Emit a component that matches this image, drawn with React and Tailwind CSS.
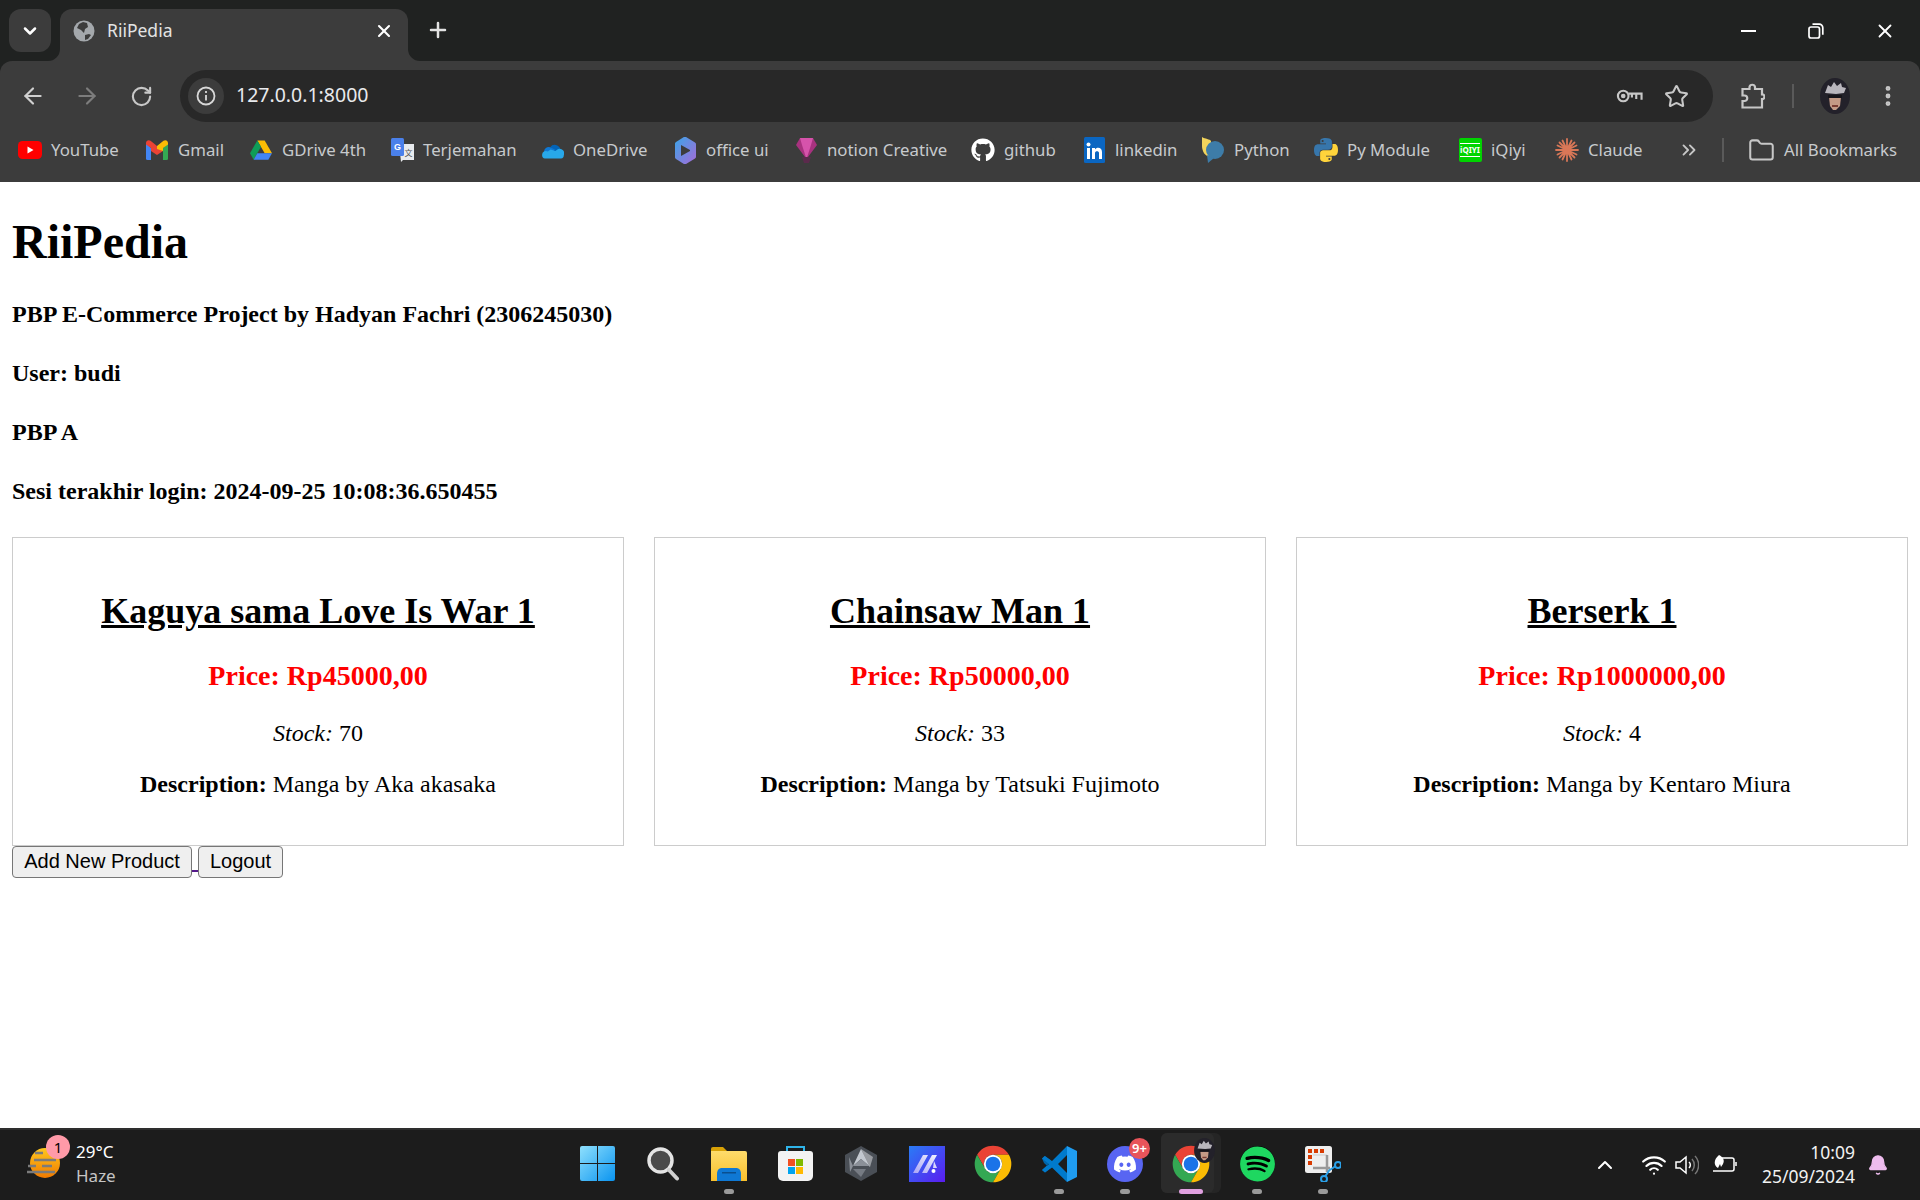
import { ArrowLeft, ArrowRight, RotateCw, Star, ChevronDown, ChevronUp, ChevronsRight, X, Plus, EllipsisVertical, Folder, Wifi, Bell } from 'lucide-react';
import { FaDiscord, FaSpotify, FaGithub } from 'react-icons/fa';

const PY = 'M11.9 2c-5 0-4.7 2.2-4.7 2.2v2.3h4.8v.7H5.3S2 6.8 2 12s2.9 5 2.9 5h1.7v-2.4s-.1-2.9 2.8-2.9h4.8s2.7 0 2.7-2.6V4.8S16.9 2 11.9 2zM9.2 3.6a.9.9 0 1 1 0 1.8.9.9 0 0 1 0-1.8z';

function ChromeLogo({ className }) {
    return (
        <svg viewBox="0 0 48 48" className={className}>
            <path fill="#ea4335" d="M6.68 14A20 20 0 0 1 41.32 14H24A10 10 0 0 0 15.34 29Z" />
            <path fill="#34a853" d="M6.68 14 15.34 29A10 10 0 0 0 32.66 29L24 44A20 20 0 0 1 6.68 14Z" />
            <path fill="#fbbc04" d="M41.32 14H24A10 10 0 0 1 32.66 29L24 44A20 20 0 0 0 41.32 14Z" />
            <circle cx="24" cy="24" r="10" fill="#fff" />
            <circle cx="24" cy="24" r="8" fill="#1a73e8" />
        </svg>
    );
}

function Avatar({ className }) {
    return (
        <svg viewBox="0 0 30 36" className={className}>
            <ellipse cx="15" cy="18" rx="15" ry="18" fill="#23212a" />
            <path fill="#b9b6bd" d="M5 15 8 7l3 2 3-5 3 4 4-3 1 4 4 1-2 5-8 1z" />
            <path fill="#c49a86" d="M9 19h12l-1 9-4 4h-3l-3-4z" />
            <rect x="8" y="17" width="14" height="3" fill="#17151b" />
            <path fill="#7a3d34" d="M12 27h6v2h-6z" />
        </svg>
    );
}

const bookmarks = [
    { label: 'YouTube', width: 'w-[127px]', icon: (
        <svg viewBox="0 0 24 18" className="w-[24px] h-[18px]"><rect width="24" height="18" rx="4.5" fill="#f00" /><path fill="#fff" d="m9.5 5.5 6 3.5-6 3.5z" /></svg>
    ) },
    { label: 'Gmail', width: 'w-[104px]', icon: (
        <svg viewBox="0 0 22 20" className="w-[22px] h-[20px]">
            <path fill="#4285f4" d="M0 3v15.5A1.5 1.5 0 0 0 1.5 20H5V8z" />
            <path fill="#34a853" d="M22 3v15.5a1.5 1.5 0 0 1-1.500 1.500H17V8z" />
            <path fill="#ea4335" d="M0 3c0-2.500 2.700-3.700 4.500-2.200L11 6l6 3v2l-6 4-6-4V8L0 4.500z" />
            <path fill="#fbbc04" d="M22 3c0-2.500-2.700-3.700-4.500-2.200L11 6v3l6 2V8l5-3.500z" />
        </svg>
    ) },
    { label: 'GDrive 4th', width: 'w-[141px]', icon: (
        <svg viewBox="0 0 24 21" className="w-[22px] h-[20px]">
            <path fill="#fbbc04" d="M8 0h8l8 14h-8z" />
            <path fill="#0f9d58" d="M8 0 0 14l4 7 8-14z" />
            <path fill="#4285f4" d="M4 21h16l4-7H8z" />
        </svg>
    ) },
    { label: 'Terjemahan', width: 'w-[150px]', icon: (
        <svg viewBox="0 0 23 24" className="w-[23px] h-[24px]">
            <path fill="#e8eaed" d="M8 6h15v16H12l-2 2z" />
            <rect width="13" height="18" rx="1.500" fill="#4a80ea" />
            <text x="6.500" y="12" fontSize="9" fontWeight="700" textAnchor="middle" fill="#fff" fontFamily="Liberation Sans, sans-serif">G</text>
            <text x="17.500" y="18" fontSize="8" textAnchor="middle" fill="#555" fontFamily="Noto Sans CJK SC, sans-serif">文</text>
        </svg>
    ) },
    { label: 'OneDrive', width: 'w-[133px]', icon: (
        <svg viewBox="0 0 24 18" className="w-[23px] h-[17px]">
            <path fill="#0364b8" d="M9.500 5.500a6 6 0 0 1 10.700 2L14 12z" />
            <path fill="#0f78d4" d="M3 10.500a5 5 0 0 1 6.500-5l5 2.500-6 8H4z" />
            <path fill="#28a8ea" d="M1 13.500A4 4 0 0 1 7 10l3-2 5 1.500 3-2a4.800 4.800 0 0 1 6 6.500 3.500 3.500 0 0 1-3 3.500H4a3.500 3.500 0 0 1-3-3.500z" />
        </svg>
    ) },
    { label: 'office ui', width: 'w-[121px]', icon: (
        <svg viewBox="0 0 21 27" className="w-[21px] h-[27px]">
            <defs><linearGradient id="off" x1="0" y1="0" x2="1" y2="1"><stop offset="0" stopColor="#3aa5e8" /><stop offset="1" stopColor="#a66bd8" /></linearGradient></defs>
            <path fill="url(#off)" d="M11 0l9 5.500c.7.500 1 1 1 2v12c0 1-.3 1.500-1 2L11 27c-.8.300-1.500.200-2.500-.3L1 22c-.7-.5-1-1-1-2V7c0-1 .3-1.500 1-2L8.500.300C9.500-.2 10.200-.2 11 0z" />
            <path fill="#3c3c3c" d="M6 8l9 5v1l-9 5z" />
        </svg>
    ) },
    { label: 'notion Creative', width: 'w-[177px]', icon: (
        <svg viewBox="0 0 21 26" className="w-[21px] h-[26px]">
            <path fill="#a8327f" d="M4 1h13l4 7-10.500 14L0 8z" />
            <path fill="#d653ab" d="M4 1h13l-2 7H6zM6 8h9l-4.500 14z" />
            <path fill="#5b2a4c" d="M6 20h9l-2 6H8z" />
        </svg>
    ) },
    { label: 'github', width: 'w-[111px]', icon: <FaGithub className="w-[24px] h-[24px] text-white" /> },
    { label: 'linkedin', width: 'w-[119px]', icon: (
        <svg viewBox="0 0 21 26" className="w-[21px] h-[26px]">
            <rect width="21" height="26" rx="1.500" fill="#0a66c2" />
            <rect x="3" y="11" width="3" height="11" fill="#fff" /><circle cx="4.500" cy="7.500" r="2" fill="#fff" />
            <path fill="#fff" d="M8 11h3v1.500c1.500-2.500 7-2.500 7 2.500v7h-3v-6c0-2.500-4-2.500-4 0v6H8z" />
        </svg>
    ) },
    { label: 'Python', width: 'w-[113px]', icon: (
        <svg viewBox="0 0 22 26" className="w-[22px] h-[26px]">
            <path fill="#f2d45c" d="M0 0c3 2 8 2 9 4v16C3 20 0 14 0 9z" />
            <circle cx="13" cy="13" r="9" fill="#3d7ca8" /><path fill="#3d7ca8" d="m5 18 1 8 6-5z" />
        </svg>
    ) },
    { label: 'Py Module', width: 'w-[144px]', icon: (
        <svg viewBox="2 2 20 20" className="w-[24px] h-[26px]">
            <path fill="#3776ab" d={PY} /><path fill="#ffd43b" d={PY} transform="rotate(180 12 12)" />
        </svg>
    ) },
    { label: 'iQiyi', width: 'w-[97px]', icon: (
        <div className="w-[23px] h-[24px] bg-[#00d400] rounded-[2px] flex items-center justify-center">
            <span className="text-[8px] leading-[12px] font-bold text-white border-y border-white">iQIYI</span>
        </div>
    ) },
    { label: 'Claude', width: 'w-[123px]', icon: (
        <svg viewBox="0 0 24 24" className="w-[24px] h-[24px]" stroke="#d97757" strokeWidth="1.800" strokeLinecap="round">
            <path d="M12 1v22M1 12h22M4.500 4.500l15 15M19.500 4.500l-15 15M7.500 2.500l9 19M16.500 2.500l-9 19M2.500 7.500l19 9M2.500 16.500l19-9" />
        </svg>
    ) },
];

// taskbar apps, one slot per app
function StartIcon() {
    return (
        <svg viewBox="0 0 35 35" className="w-[35px] h-[35px]">
            <defs><linearGradient id="win" x1="0" y1="0" x2="1" y2="1"><stop offset="0" stopColor="#8fe0fd" /><stop offset="1" stopColor="#0a94f0" /></linearGradient></defs>
            <path fill="url(#win)" d="M2 0h15v17H0V2a2 2 0 0 1 2-2zM18 0h15a2 2 0 0 1 2 2v15H18zM0 18h17v17H2a2 2 0 0 1-2-2zM18 18h17v15a2 2 0 0 1-2 2H18z" />
        </svg>
    );
}

function SearchIcon() {
    return (
        <svg viewBox="0 0 32 34" className="w-[32px] h-[34px]">
            <circle cx="13.500" cy="13.500" r="11.500" fill="#4a4a4a" stroke="#e4e4e4" strokeWidth="3.500" />
            <path d="m22 23 8 8.500" stroke="#d0d0d0" strokeWidth="4" strokeLinecap="round" />
        </svg>
    );
}

function ExplorerIcon() {
    return (
        <svg viewBox="0 0 36 34" className="w-[36px] h-[34px]">
            <path fill="#d8a106" d="M0 2a2 2 0 0 1 2-2h10l4 4H0z" />
            <defs><linearGradient id="fol" x1="0" y1="0" x2="0" y2="1"><stop offset="0" stopColor="#ffdc6b" /><stop offset="1" stopColor="#f8bf2c" /></linearGradient></defs>
            <path fill="url(#fol)" d="M0 4h34a2 2 0 0 1 2 2v28H0z" />
            <path fill="#0f78d4" d="M6 34h24v-7c0-4-2-6-5-6H11c-3 0-5 2-5 6z" />
            <rect x="11" y="25" width="14" height="1.500" fill="#0a4f8f" />
        </svg>
    );
}

function StoreIcon() {
    return (
        <svg viewBox="0 0 35 35" className="w-[35px] h-[35px]">
            <path d="M9 6V1h17v5" fill="none" stroke="#2fb4e9" strokeWidth="2" />
            <path fill="#f3f3f3" d="M3 5h29a3 3 0 0 1 3 3v22a5 5 0 0 1-5 5H5a5 5 0 0 1-5-5V8a3 3 0 0 1 3-3z" />
            <rect x="10" y="13" width="7" height="7" fill="#f25022" /><rect x="18" y="13" width="7" height="7" fill="#7fba00" />
            <rect x="10" y="21" width="7" height="7" fill="#00a4ef" /><rect x="18" y="21" width="7" height="7" fill="#ffb900" />
        </svg>
    );
}

function HexIcon() {
    return (
        <svg viewBox="0 0 32 35" className="w-[32px] h-[35px]">
            <path fill="#4a4f56" d="M16 0 32 9v17l-16 9L0 26V9z" />
            <path fill="#c3c8cf" d="M16 3 8 20l8-7 9 8z" />
            <path fill="#8b9098" d="M8 20h17l-9-7zM4 11l4 9-3 6z" />
            <path fill="#e5e7ea" d="M16 3l9 18 3-10z" opacity=".5" />
            <path fill="#767b83" d="M8 23h13l-5 8z" />
        </svg>
    );
}

function MalaIcon() {
    return (
        <svg viewBox="0 0 36 36" className="w-[36px] h-[36px]">
            <defs>
                <linearGradient id="mala" x1="0" y1="0" x2="1" y2="1"><stop offset="0" stopColor="#2a7cf5" /><stop offset="1" stopColor="#5a1cf0" /></linearGradient>
                <linearGradient id="malb" x1="0" y1="1" x2="1" y2="0"><stop offset="0" stopColor="#a9a4f5" /><stop offset="1" stopColor="#f2f2ff" /></linearGradient>
            </defs>
            <rect width="36" height="36" fill="url(#mala)" />
            <path fill="url(#malb)" d="M4 27 14 9h5L9 27zM13 27 23 9h5L18 27zM25 15l3 7h-4z" />
            <circle cx="24.500" cy="25" r="2" fill="#fff" />
        </svg>
    );
}

function VsCodeIcon() {
    return (
        <svg viewBox="0 0 36 36" className="w-[36px] h-[36px]">
            <path fill="#0065a9" d="M1 12.500 3.500 10l10 7.500-2.500 3.500-2 1.500-6-5.500zM1 24l3 2.500L14 18l-3-3z" />
            <path fill="#007acc" d="M26 0 11 15l-7-5-3 2.500L8 18 1 24l3 2.500 7-5 15 14.500V27L17 18l9-9z" />
            <path fill="#1f9cf0" d="M26 0l10 5v26l-10 5z" />
        </svg>
    );
}

function SnipIcon() {
    return (
        <svg viewBox="0 0 36 36" className="w-[36px] h-[36px]">
            <rect width="27" height="27" rx="2.500" fill="#eee" />
            <path fill="#d83b01" d="M3 3h4v4H3zM9 3h4v4H9zM15 3h4v4h-4zM3 9h4v4H3zM3 15h4v4H3z" />
            <path d="M8 9h14v14" fill="none" stroke="#ccc" strokeWidth="1" />
            <path d="M8 22h17M22 9v17" stroke="#999" strokeWidth="2.500" />
            <circle cx="33" cy="19" r="3" fill="none" stroke="#2aa0e8" strokeWidth="2" />
            <circle cx="19" cy="33" r="3" fill="none" stroke="#2aa0e8" strokeWidth="2" />
            <path d="m30 20.500-6 4M20.500 30l4-6" stroke="#2aa0e8" strokeWidth="2" />
        </svg>
    );
}

function Dot() {
    return <span className="absolute bottom-[6px] left-[28px] w-[10px] h-[5px] rounded-full bg-[#9a9a9a]" />;
}

function TaskItem({ children, dot }) {
    return (
        <div className="relative w-[66px] h-[70px] flex items-center justify-center pb-[3px]">
            {children}
            {dot && <Dot />}
        </div>
    );
}

function Card({ title, price, stock, author }) {
    return (
        <div className="border border-[#ccc] p-[22px] text-center">
            <h2 className="mt-[31px] mb-[28px] text-[36px] leading-[41px] font-bold underline">{title}</h2>
            <h3 className="mb-[28px] text-[28px] leading-[32px] font-bold text-[#f00]">Price: {price}</h3>
            <p className="mb-[24px] text-[24px] leading-[27px]"><em>Stock:</em> {stock}</p>
            <p className="mb-[25px] text-[24px] leading-[27px]"><strong>Description:</strong> Manga by {author}</p>
        </div>
    );
}

export default function App() {
    return (
        <div className="w-[1920px] h-[1200px] flex flex-col overflow-hidden bg-white font-['Noto_Sans',sans-serif]">
            <header className="h-[182px] flex flex-col bg-[#202221] shrink-0">
                {/* tab strip */}
                <div className="h-[61px] pt-[9px] pl-[9px] flex items-start shrink-0">
                    <button className="w-[42px] h-[43px] rounded-[12px] bg-[#3c3c3c] flex items-center justify-center">
                        <ChevronDown className="w-[20px] h-[20px] text-white" strokeWidth={3} />
                    </button>
                    <div className="relative ml-[9px] w-[348px] h-[52px] rounded-t-[12px] bg-[#3c3c3c] flex items-center pl-[13px] pb-[8px]">
                        <svg viewBox="0 0 12 12" className="absolute left-[-12px] bottom-0 w-[12px] h-[12px]"><path fill="#3c3c3c" d="M12 0v12H0A12 12 0 0 0 12 0z" /></svg>
                        <svg viewBox="0 0 12 12" className="absolute right-[-12px] bottom-0 w-[12px] h-[12px]"><path fill="#3c3c3c" d="M0 0v12h12A12 12 0 0 1 0 0z" /></svg>
                        <svg viewBox="0 0 22 22" className="w-[22px] h-[22px] shrink-0">
                            <circle cx="11" cy="11" r="10.500" fill="#a4a8ac" />
                            <path fill="#3c3c3c" d="M10 2 6 4 4 8l4 2 3 3 1-4 3-2-1-4zM12 15l4-1 2 1-3 4-3 1z" />
                        </svg>
                        <span className="ml-[12px] text-[17.500px] text-[#e3e3e3] leading-none">RiiPedia</span>
                        <X className="ml-auto mr-[14px] w-[20px] h-[20px] text-white" strokeWidth={2.500} />
                    </div>
                    <Plus className="ml-[18px] mt-[9px] w-[24px] h-[24px] text-[#e3e3e3]" strokeWidth={2.500} />
                    <div className="ml-auto flex items-center h-[44px] pr-[24px]">
                        <span className="w-[15px] h-[2px] bg-white" />
                        <svg viewBox="0 0 16 16" className="ml-[52px] w-[16px] h-[16px]" fill="none" stroke="#fff" strokeWidth="1.700">
                            <rect x="1" y="4" width="10.500" height="11" rx="2" /><path d="M4.500 1.200h6.500a3.500 3.500 0 0 1 3.800 3.500v7" />
                        </svg>
                        <X className="ml-[50px] w-[22px] h-[22px] text-white" strokeWidth={2} />
                    </div>
                </div>
                <div className="flex-1 flex flex-col rounded-t-[12px] bg-[#3c3c3c]">
                    {/* toolbar */}
                    <div className="h-[61px] pt-[9px] flex items-center shrink-0">
                        <ArrowLeft className="ml-[20px] w-[26px] h-[26px] text-[#d0d0d0]" strokeWidth={2} />
                        <ArrowRight className="ml-[28px] w-[26px] h-[26px] text-[#7d7d7d]" strokeWidth={2} />
                        <RotateCw className="ml-[30px] w-[23px] h-[23px] text-[#c7c7c7]" strokeWidth={2.200} />
                        <div className="ml-[27px] w-[1533px] h-[52px] rounded-full bg-[#282828] flex items-center pl-[8px] pr-[24px]">
                            <div className="w-[36px] h-[36px] rounded-full bg-[#3c3c3c] flex items-center justify-center">
                                <svg viewBox="0 0 20 20" className="w-[20px] h-[20px]" fill="none" stroke="#d8d8d8" strokeWidth="1.800">
                                    <circle cx="10" cy="10" r="8.500" /><path d="M10 9v5.500M10 5v2" />
                                </svg>
                            </div>
                            <span className="ml-[12px] mb-[2px] text-[19.500px] text-[#e8eaed]">127.0.0.1:8000</span>
                            <svg viewBox="0 0 28 18" className="ml-auto w-[27px] h-[18px]" fill="none" stroke="#c7c7c7" strokeWidth="2.200">
                                <circle cx="7.500" cy="9" r="5.500" /><path d="M13 6.500h13.500v6.500M21 7v5M16.500 7v3.500" />
                                <circle cx="7.500" cy="9" r="1.300" fill="#c7c7c7" />
                            </svg>
                            <Star className="ml-[21px] w-[25px] h-[25px] text-[#c7c7c7]" strokeWidth={2} />
                        </div>
                        <svg viewBox="0 0 24 26" className="ml-[28px] w-[24px] h-[26px]" fill="none" stroke="#c7c7c7" strokeWidth="2.200">
                            <path d="M1.500 6h7V4a2.800 2.800 0 0 1 5.500 0v2h7v5.500h1a2.500 2.500 0 0 1 0 4.500h-1v8.500H1.500V18h2a2.500 2.500 0 0 0 0-5.500h-2z" />
                        </svg>
                        <span className="ml-[27px] w-[2px] h-[24px] bg-[#5a5a5a]" />
                        <Avatar className="ml-[26px] w-[30px] h-[36px]" />
                        <EllipsisVertical className="ml-[25px] w-[26px] h-[26px] text-[#c7c7c7]" strokeWidth={2.500} />
                    </div>
                    {/* bookmarks bar */}
                    <div className="h-[60px] pl-[18px] pb-[4px] flex items-center">
                        {bookmarks.map((b) => (
                            <div key={b.label} className={`${b.width} shrink-0 flex items-center`}>
                                <div className="w-[24px] flex justify-center shrink-0">{b.icon}</div>
                                <span className="ml-[9px] text-[16.800px] text-[#c7cacd] whitespace-nowrap">{b.label}</span>
                            </div>
                        ))}
                        <ChevronsRight className="w-[22px] h-[22px] text-[#c7c7c7]" strokeWidth={2} />
                        <span className="ml-[22px] w-[2px] h-[24px] bg-[#5a5a5a]" />
                        <Folder className="ml-[24px] w-[27px] h-[27px] text-[#c7c7c7]" strokeWidth={1.800} />
                        <span className="ml-[9px] text-[16.800px] text-[#c7cacd] whitespace-nowrap">All Bookmarks</span>
                    </div>
                </div>
            </header>

            <main className="flex-1 px-[12px] text-black font-['Liberation_Serif',serif]">
                <h1 className="mt-[32px] mb-[32px] text-[48px] leading-[55px] font-bold">RiiPedia</h1>
                <h4 className="mb-[32px] text-[24px] leading-[27px] font-bold">PBP E-Commerce Project by Hadyan Fachri (2306245030)</h4>
                <h4 className="mb-[32px] text-[24px] leading-[27px] font-bold">User: budi</h4>
                <h4 className="mb-[32px] text-[24px] leading-[27px] font-bold">PBP A</h4>
                <h4 className="mb-[32px] text-[24px] leading-[27px] font-bold">Sesi terakhir login: 2024-09-25 10:08:36.650455</h4>
                <div className="grid grid-cols-3 gap-[30px]">
                    <Card title="Kaguya sama Love Is War 1" price="Rp45000,00" stock="70" author="Aka akasaka" />
                    <Card title="Chainsaw Man 1" price="Rp50000,00" stock="33" author="Tatsuki Fujimoto" />
                    <Card title="Berserk 1" price="Rp1000000,00" stock="4" author="Kentaro Miura" />
                </div>
                <div className="flex items-end font-['Liberation_Sans',sans-serif]">
                    <button className="w-[180px] h-[32px] pb-[2px] border border-[#767676] rounded-[4px] bg-[#efefef] text-[20px] leading-none">Add New Product</button>
                    <span className="w-[6px] h-[2px] mb-[6px] bg-[#551a8b]" />
                    <button className="w-[85px] h-[32px] pb-[2px] border border-[#767676] rounded-[4px] bg-[#efefef] text-[20px] leading-none">Logout</button>
                </div>
            </main>

            <footer className="h-[72px] shrink-0 bg-[#1c1c1c] border-t-2 border-[#2e2e2e] flex items-center text-white">
                <div className="w-[564px] h-full pl-[30px] flex items-center shrink-0">
                    <div className="relative w-[30px] h-[30px] mt-[-4px]">
                        <svg viewBox="0 0 34 30" className="w-[34px] h-[30px] ml-[-4px]">
                            <defs><linearGradient id="sun" x1="0" y1="0" x2="0" y2="1"><stop offset="0" stopColor="#ffc81e" /><stop offset="1" stopColor="#f07a00" /></linearGradient></defs>
                            <circle cx="19" cy="15" r="15" fill="url(#sun)" />
                            <path stroke="#7b7b7b" strokeWidth="2.500" d="M9 5h8M8 12h22M2 18h8M16 18h10M1 24h28" />
                        </svg>
                        <span className="absolute left-[16px] top-[-13px] w-[24px] h-[24px] rounded-full bg-[#ff9aa8] text-black text-[15px] leading-[24px] text-center">1</span>
                    </div>
                    <div className="ml-[16px] mb-[3px] flex flex-col">
                        <span className="text-[17px] leading-[24px]">29°C</span>
                        <span className="text-[17px] leading-[24px] text-[#c5c5c5]">Haze</span>
                    </div>
                </div>

                <div className="flex items-center shrink-0">
                    <TaskItem><StartIcon /></TaskItem>
                    <TaskItem><SearchIcon /></TaskItem>
                    <TaskItem dot><ExplorerIcon /></TaskItem>
                    <TaskItem><StoreIcon /></TaskItem>
                    <TaskItem><HexIcon /></TaskItem>
                    <TaskItem><MalaIcon /></TaskItem>
                    <TaskItem><ChromeLogo className="w-[44px] h-[44px]" /></TaskItem>
                    <TaskItem dot><VsCodeIcon /></TaskItem>
                    <TaskItem dot>
                        <div className="w-[36px] h-[36px] rounded-full bg-[#5865f2] flex items-center justify-center">
                            <FaDiscord className="w-[24px] h-[24px] text-white" />
                        </div>
                        <span className="absolute left-[37px] top-[8px] w-[21px] h-[21px] rounded-full bg-[#e8545a] text-[13px] leading-[21px] text-center font-semibold">9+</span>
                    </TaskItem>
                    <TaskItem>
                        <div className="absolute left-[3px] top-[3px] w-[60px] h-[60px] rounded-[6px] bg-[#252525]" />
                        <div className="absolute left-[3px] top-[3px] w-[53px] h-[60px] rounded-[6px] bg-[#2b2b2b]" />
                        <ChromeLogo className="relative w-[44px] h-[44px]" />
                        <Avatar className="absolute left-[34px] top-[8px] w-[25px] h-[25px]" />
                        <span className="absolute bottom-[6px] left-[21px] w-[24px] h-[5px] rounded-full bg-[#e0a0e0]" />
                    </TaskItem>
                    <TaskItem dot>
                        <div className="w-[35px] h-[35px] rounded-full bg-black flex items-center justify-center">
                            <FaSpotify className="w-[36px] h-[36px] text-[#1ed760]" />
                        </div>
                    </TaskItem>
                    <TaskItem dot><SnipIcon /></TaskItem>
                </div>

                <div className="flex-1 h-full flex items-center justify-end pr-[31px]">
                    <ChevronUp className="w-[24px] h-[24px] text-white" strokeWidth={2} />
                    <Wifi className="ml-[24px] w-[26px] h-[26px] text-white" strokeWidth={2} />
                    <svg viewBox="0 0 24 24" className="ml-[8px] w-[24px] h-[24px]" fill="none" strokeWidth="1.500">
                        <path stroke="#fff" d="M1 9v6h4l6 5V4L5 9z" />
                        <path stroke="#fff" d="M14 9a4 4 0 0 1 0 6" />
                        <path stroke="#777" d="M17 6a9 9 0 0 1 0 12M20 3a13 13 0 0 1 0 18" />
                    </svg>
                    <svg viewBox="0 0 26 20" className="ml-[13px] w-[26px] h-[20px]" fill="none" stroke="#fff" strokeWidth="1.500">
                        <path fill="#fff" stroke="none" d="M7 0c4 2 6 5 4 9l-2 3-1-3-2 4C2 11 1 5 7 0z" />
                        <path d="M10 3h10a2 2 0 0 1 2 2v9a2 2 0 0 1-2 2H1M24 7v4" />
                    </svg>
                    <div className="ml-[17px] mb-[3px] w-[100px] flex flex-col items-end">
                        <span className="text-[17.500px] leading-[24px] text-[#f2f2f2]">10:09</span>
                        <span className="text-[17.500px] leading-[24px] text-[#f2f2f2]">25/09/2024</span>
                    </div>
                    <Bell className="ml-[12px] w-[22px] h-[24px] text-[#eebcee]" fill="#eebcee" strokeWidth={1.500} />
                </div>
            </footer>
        </div>
    );
}
